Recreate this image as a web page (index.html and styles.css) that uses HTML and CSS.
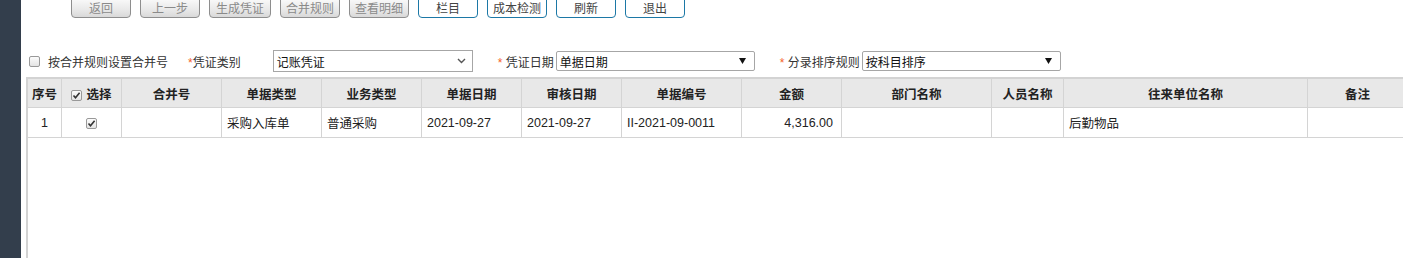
FILE: index.html
```html
<!DOCTYPE html>
<html lang="zh-CN">

<head>
  <meta charset="UTF-8">
  <meta name="viewport" content="width=device-width, initial-scale=1.0">
  <link rel="stylesheet" href="styles.css">
  <title>生成凭证</title>
</head>

<body>
  <div class="page">
    <div class="side"></div>
    <div class="main">
      <!-- 工具栏 -->
      <div class="toolbar">
        <button class="btn off">返回</button>
        <button class="btn off">上一步</button>
        <button class="btn off wide">生成凭证</button>
        <button class="btn off">合并规则</button>
        <button class="btn off">查看明细</button>
        <button class="btn">栏目</button>
        <button class="btn">成本检测</button>
        <button class="btn">刷新</button>
        <button class="btn">退出</button>
      </div>

      <!-- 条件 -->
      <div class="filter">
        <span class="cb"></span>
        <span class="lbl">按合并规则设置合并号</span>
        <span class="lbl f-type"><em>*</em>凭证类别</span>
        <div class="sel sel-lg">
          <span>记账凭证</span>
          <svg width="9" height="6" viewBox="0 0 9 6"><path d="M1 1l3.5 3.5L8 1" fill="none" stroke="#555" stroke-width="1.4"/></svg>
        </div>
        <span class="lbl f-next"><em>*</em> 凭证日期</span>
        <div class="sel">
          <span>单据日期</span>
          <svg width="7" height="6" viewBox="0 0 7 6"><path d="M0 0h7L3.5 6z" fill="#111"/></svg>
        </div>
        <span class="lbl f-next"><em>*</em> 分录排序规则</span>
        <div class="sel">
          <span>按科目排序</span>
          <svg width="7" height="6" viewBox="0 0 7 6"><path d="M0 0h7L3.5 6z" fill="#111"/></svg>
        </div>
      </div>

      <!-- 明细表 -->
      <div class="grid-wrap">
        <table class="grid">
          <colgroup>
            <col style="width:34px">
            <col style="width:60px">
            <col style="width:100px">
            <col style="width:100px">
            <col style="width:100px">
            <col style="width:100px">
            <col style="width:100px">
            <col style="width:120px">
            <col style="width:100px">
            <col style="width:150px">
            <col style="width:72px">
            <col style="width:244px">
            <col style="width:100px">
          </colgroup>
          <thead>
            <tr>
              <th>序号</th>
              <th><span class="cb on"><svg width="9" height="9" viewBox="0 0 9 9"><path d="M1.5 4.5l2 2.2L7.6 1.8" fill="none" stroke="#333" stroke-width="1.6"/></svg></span>选择</th>
              <th>合并号</th>
              <th>单据类型</th>
              <th>业务类型</th>
              <th>单据日期</th>
              <th>审核日期</th>
              <th>单据编号</th>
              <th>金额</th>
              <th>部门名称</th>
              <th>人员名称</th>
              <th>往来单位名称</th>
              <th>备注</th>
            </tr>
          </thead>
          <tbody>
            <tr>
              <td class="c">1</td>
              <td class="c"><span class="cb on"><svg width="9" height="9" viewBox="0 0 9 9"><path d="M1.5 4.5l2 2.2L7.6 1.8" fill="none" stroke="#333" stroke-width="1.6"/></svg></span></td>
              <td></td>
              <td>采购入库单</td>
              <td>普通采购</td>
              <td>2021-09-27</td>
              <td>2021-09-27</td>
              <td>II-2021-09-0011</td>
              <td class="r">4,316.00</td>
              <td></td>
              <td></td>
              <td>后勤物品</td>
              <td></td>
            </tr>
          </tbody>
        </table>
      </div>
    </div>
  </div>
</body>
</html>
```

FILE: styles.css
```css
html,
body {
  height: 100%;
  margin: 0;
  overflow: hidden;
}

body {
  font-family: "Liberation Sans", "Noto Sans CJK SC", sans-serif;
  font-size: 12px;
  color: #333;
  background: #fff;
}

.page {
  display: flex;
  height: 100%;
}

.side {
  flex: none;
  width: 21px;
  background: #333e4c;
}

.main {
  flex: 1;
  min-width: 0;
  display: flex;
  flex-direction: column;
  overflow: hidden;
}

/* 工具栏 */
.toolbar {
  display: flex;
  gap: 9px;
  height: 21px;
  margin-top: -3px;
  padding-left: 50px;
}

.btn {
  box-sizing: border-box;
  width: 60px;
  height: 21px;
  padding: 3px 0 0;
  border: 1px solid #1c78a6;
  border-radius: 0 0 4px 4px;
  background: #fff;
  color: #444;
  font-family: inherit;
  font-size: 12px;
  line-height: 14px;
  outline: none;
}

.btn.off {
  border-color: #8e8e8e;
  background: linear-gradient(to bottom, #fbfbfb 0%, #e9e9e9 60%, #d9d9d9 100%);
  color: #8a8a8a;
}

.btn.wide {
  width: 62px;
}

/* 条件 */
.filter {
  display: flex;
  align-items: center;
  height: 22px;
  margin-top: 32px;
  padding-left: 8px;
}

.cb {
  box-sizing: border-box;
  display: inline-flex;
  align-items: center;
  justify-content: center;
  width: 11px;
  height: 11px;
  border: 1px solid #999;
  border-radius: 2px;
  background: linear-gradient(to bottom, #fcfcfc, #e4e4e4);
  vertical-align: -1px;
}

.filter .cb {
  margin-right: 8px;
}

.lbl em {
  font-style: normal;
  color: #f5632a;
}

.f-type {
  margin-left: 20px;
  margin-right: 32px;
}

.f-next {
  margin-left: 25px;
  margin-right: 2px;
}

.sel {
  box-sizing: border-box;
  display: flex;
  align-items: center;
  justify-content: space-between;
  width: 199px;
  height: 20px;
  padding: 0 8px 0 3px;
  border: 1px solid #a6a6a6;
  border-radius: 2px;
  color: #111;
}

.sel-lg {
  width: 200px;
  height: 22px;
  border-radius: 0;
  padding-right: 6px;
}

/* 明细表 */
.grid-wrap {
  flex: 1;
  margin: 5px 0 0 5px;
  border-top: 2px solid #d3d3d3;
  border-left: 2px solid #d3d3d3;
}

.grid {
  width: 1380px;
  table-layout: fixed;
  border-collapse: separate;
  border-spacing: 0;
  font-size: 12.5px;
}

.grid th,
.grid td {
  padding: 0 5px;
  border-right: 1px solid #d4d4d4;
  border-bottom: 1px solid #d4d4d4;
  white-space: nowrap;
  overflow: hidden;
}

.grid thead tr {
  height: 29px;
}

.grid tbody tr {
  height: 30px;
}

.grid th {
  padding: 0;
  background: #e8e8e8;
  color: #222;
  font-weight: bold;
  text-align: center;
}

.grid th .cb {
  margin-right: 4px;
}

.grid td {
  color: #222;
  text-align: left;
}

.grid td.c {
  padding: 0;
  text-align: center;
}

.grid td.r {
  padding-right: 8px;
  text-align: right;
}
```
